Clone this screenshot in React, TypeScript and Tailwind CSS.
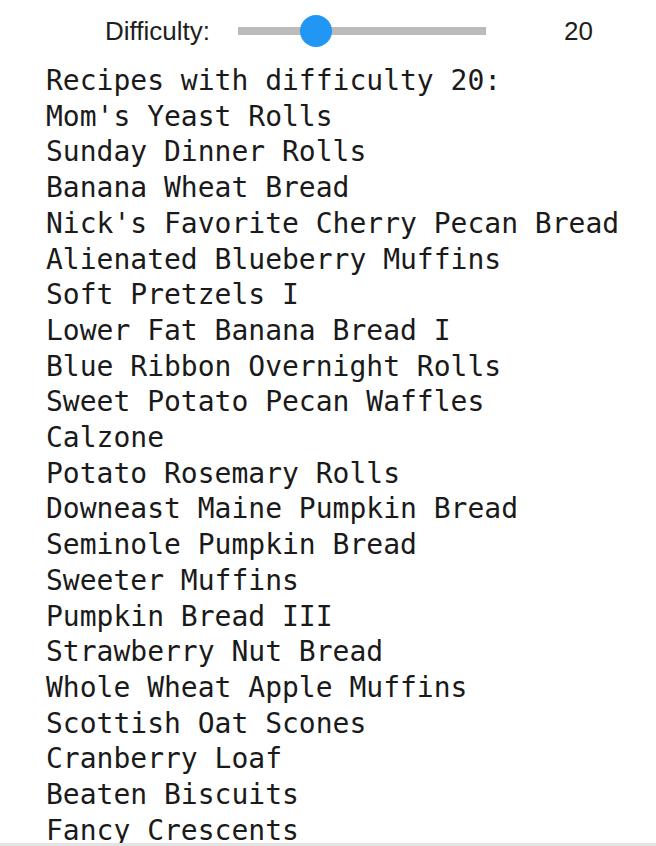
const recipes = [
  "Mom's Yeast Rolls",
  'Sunday Dinner Rolls',
  'Banana Wheat Bread',
  "Nick's Favorite Cherry Pecan Bread",
  'Alienated Blueberry Muffins',
  'Soft Pretzels I',
  'Lower Fat Banana Bread I',
  'Blue Ribbon Overnight Rolls',
  'Sweet Potato Pecan Waffles',
  'Calzone',
  'Potato Rosemary Rolls',
  'Downeast Maine Pumpkin Bread',
  'Seminole Pumpkin Bread',
  'Sweeter Muffins',
  'Pumpkin Bread III',
  'Strawberry Nut Bread',
  'Whole Wheat Apple Muffins',
  'Scottish Oat Scones',
  'Cranberry Loaf',
  'Beaten Biscuits',
  'Fancy Crescents',
];

function DifficultySlider({ value }: { value: number }) {
  return (
    <div className="flex h-[62px] shrink-0 items-center font-['Liberation_Sans',Arial,sans-serif] text-[26px] text-[#1e1e1e]">
      <label className="w-[210px] text-right">Difficulty:</label>
      <div className="relative ml-[28px] h-[8px] w-[248px] bg-[#bbbbbb]">
        <div className="absolute left-[62px] top-[-12px] h-[32px] w-[32px] rounded-full bg-[#2196f3]" />
      </div>
      <span className="ml-[78px]">{value}</span>
    </div>
  );
}

export default function App() {
  const difficulty = 20;

  return (
    <div className="flex h-[846px] flex-col overflow-hidden bg-white">
      <DifficultySlider value={difficulty} />
      <div className="min-h-0 flex-1 overflow-hidden pl-[46px] pt-[1px] font-['DejaVu_Sans_Mono',monospace] text-[28px] leading-[35.7px] text-[#1a1a1a]">
        <div className="whitespace-pre">Recipes with difficulty {difficulty}:</div>
        {recipes.map((name) => (
          <div key={name} className="whitespace-pre">
            {name}
          </div>
        ))}
      </div>
      <div className="h-[3px] shrink-0 bg-[#e3e3e3]" />
    </div>
  );
}
